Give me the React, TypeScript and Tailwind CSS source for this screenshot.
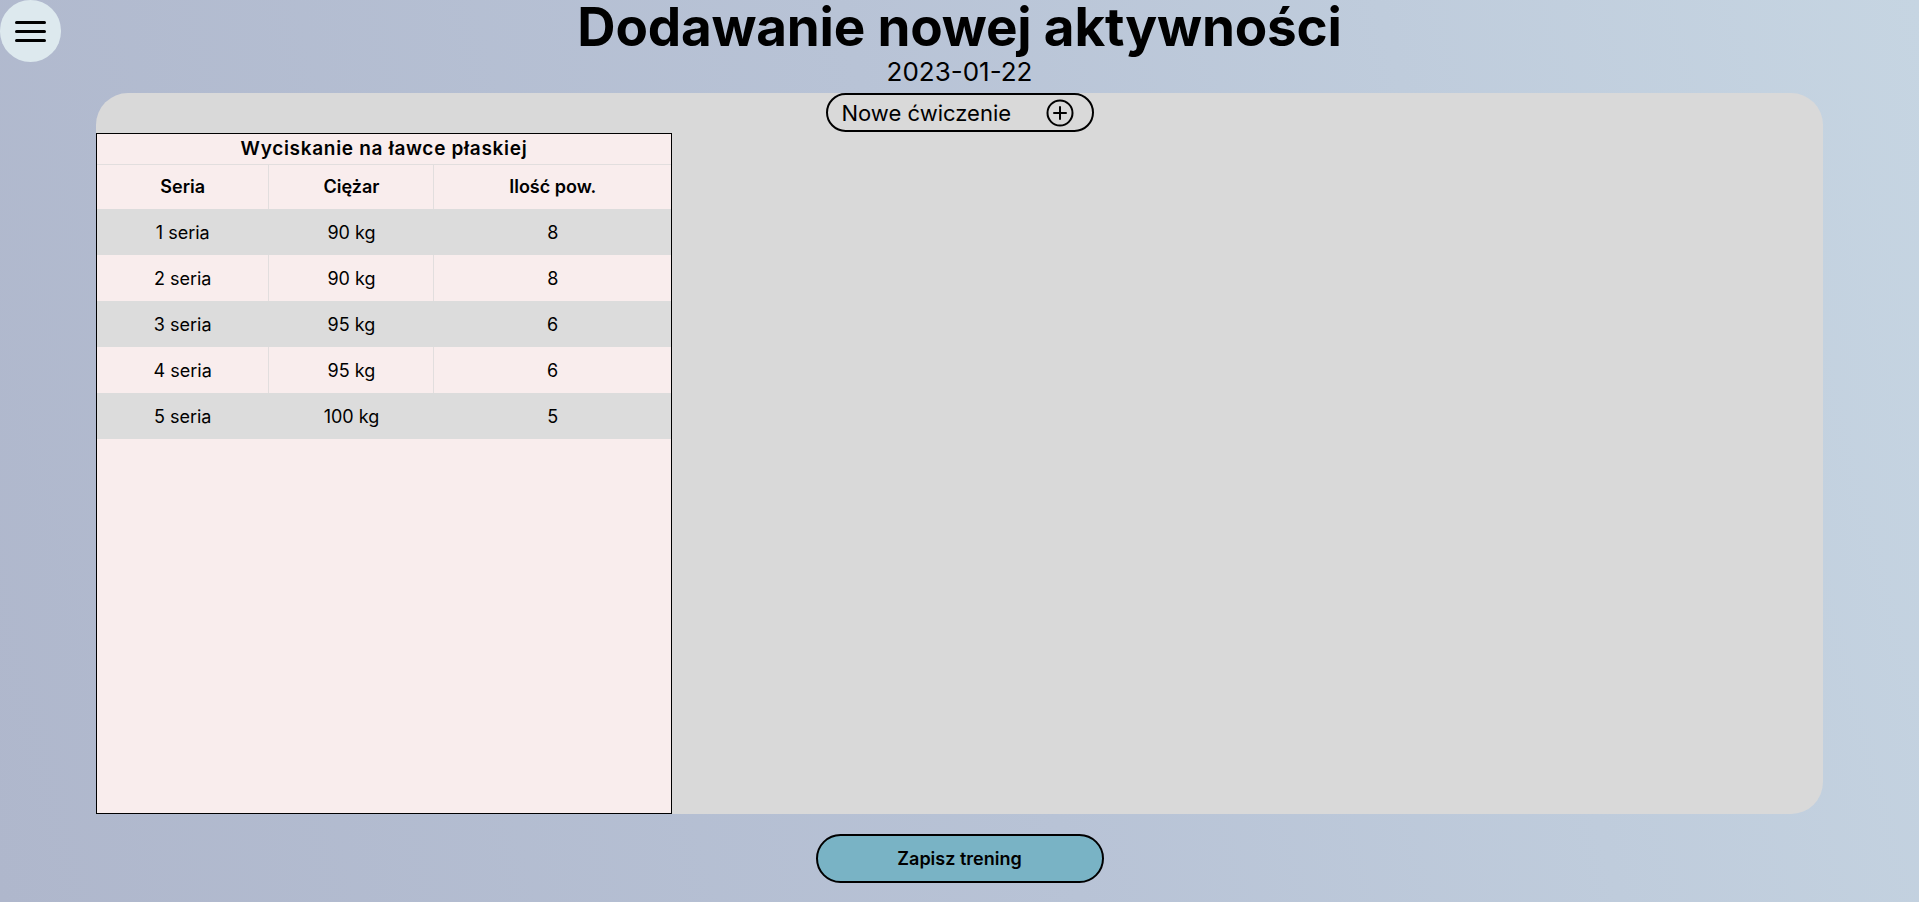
import React from "react";

const rows = [
  { s: "1 seria", w: "90 kg", r: "8" },
  { s: "2 seria", w: "90 kg", r: "8" },
  { s: "3 seria", w: "95 kg", r: "6" },
  { s: "4 seria", w: "95 kg", r: "6" },
  { s: "5 seria", w: "100 kg", r: "5" },
];

export default function App() {
  return (
    <div className="relative min-h-screen w-full bg-[linear-gradient(75deg,#afb7cc_0%,#b8c3d6_50%,#c6d5e2_100%)] font-['Inter',sans-serif] text-black flex flex-col items-center">
      <button className="absolute left-0 top-0 w-[61px] h-[62px] rounded-full bg-[#dde9ee] flex flex-col items-center justify-center gap-[6px]">
        <span className="block w-[31px] h-[3px] rounded-full bg-black" />
        <span className="block w-[31px] h-[3px] rounded-full bg-black" />
        <span className="block w-[31px] h-[3px] rounded-full bg-black" />
      </button>

      <h1 className="pt-[1px] text-[53px] leading-[53px] font-bold tracking-[-0.2px]">
        Dodawanie nowej aktywności
      </h1>
      <p className="mt-[5px] text-[26px] leading-[26px]">2023-01-22</p>

      <main className="mt-[8px] w-[90%] h-[721px] bg-[#d9d9d9] rounded-[32px] flex flex-col">
        <button className="self-center h-[39px] w-[268px] border-2 border-black rounded-full flex items-center pl-[14px] pr-[18px] justify-between">
          <span className="text-[22px] leading-none">Nowe ćwiczenie</span>
          <svg width="28" height="28" viewBox="0 0 28 28" fill="none" stroke="black" strokeWidth="2">
            <circle cx="14" cy="14" r="12.5" />
            <line x1="14" y1="8" x2="14" y2="20" strokeLinecap="round" />
            <line x1="8" y1="14" x2="20" y2="14" strokeLinecap="round" />
          </svg>
        </button>

        <div className="mt-[1px] w-[576px] flex-1 border border-black bg-[#f9eded]">
          <table className="w-full border-collapse text-[18px]">
            <thead>
              <tr className="h-[30px] border-b border-[#e2dede]">
                <th colSpan={3} className="font-semibold text-[19px] tracking-[0.7px] leading-none p-0">
                  Wyciskanie na ławce płaskiej
                </th>
              </tr>
              <tr className="h-[45px]">
                <th className="w-[172px] border-r border-[#e2dede] font-semibold p-0">Seria</th>
                <th className="w-[165px] border-r border-[#e2dede] font-semibold p-0">Ciężar</th>
                <th className="font-semibold p-0">Ilość pow.</th>
              </tr>
            </thead>
            <tbody>
              {rows.map((r, i) => (
                <tr key={i} className={`h-[46px] ${i % 2 === 0 ? "bg-[#dcdcdc]" : "bg-[#f9eded]"}`}>
                  <td className={`text-center p-0 border-r ${i % 2 === 0 ? "border-[#dcdcdc]" : "border-[#e2dede]"}`}>{r.s}</td>
                  <td className={`text-center p-0 border-r ${i % 2 === 0 ? "border-[#dcdcdc]" : "border-[#e2dede]"}`}>{r.w}</td>
                  <td className="text-center p-0">{r.r}</td>
                </tr>
              ))}
            </tbody>
          </table>
        </div>
      </main>

      <button className="mt-[20px] w-[288px] h-[49px] rounded-full border-2 border-black bg-[#79b3c5] font-semibold text-[18px]">
        Zapisz trening
      </button>
    </div>
  );
}
